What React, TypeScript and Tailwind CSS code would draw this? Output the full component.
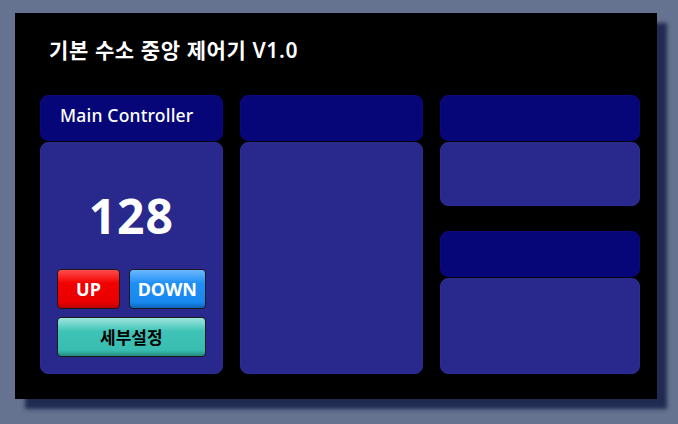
import React from 'react';

const font = { fontFamily: '"Noto Sans", "Noto Sans CJK KR", sans-serif' };

const Header = ({ children }: { children?: React.ReactNode }) => (
  <div className="h-[46px] shrink-0 rounded-[8px] border border-[#0a0a7e] bg-[#060679] pl-[19px] pb-[5px] flex items-center">
    {children}
  </div>
);

const Body = ({ className = '', children }: { className?: string; children?: React.ReactNode }) => (
  <div className={`rounded-[8px] border border-[#2c2c92] bg-[#29298d] ${className}`}>{children}</div>
);

const GlossButton = ({
  label,
  className,
  textClass,
}: {
  label: string;
  className: string;
  textClass: string;
}) => (
  <button
    type="button"
    className={`relative flex items-center justify-center overflow-hidden rounded-[4px] border border-[#1a1a1a] ${className}`}
  >
    <span className={`relative font-bold leading-none ${textClass}`}>{label}</span>
  </button>
);

export default function App() {
  return (
    <div className="w-[678px] h-[424px] bg-[#667390] pl-[15px] pt-[13px]" style={font}>
      <div className="w-[642px] h-[386px] bg-black shadow-[10px_10px_4px_rgba(20,30,70,0.85)] flex flex-col pl-[25px] pr-[17px]">
        <h1 className="h-[82px] pl-[9px] pt-[24px] text-[21px] font-semibold text-white leading-[26px] tracking-[0.6px]">
          기본 수소 중앙 제어기 V1.0
        </h1>

        <div className="flex gap-[17px] h-[279px]">
          {/* column 1 */}
          <div className="w-[183px] flex flex-col gap-[1px]">
            <Header>
              <span className="text-[17.5px] font-medium text-white leading-none tracking-[0.2px]">Main Controller</span>
            </Header>
            <Body className="flex-1 flex flex-col items-center px-[16px]">
              <div className="mt-[47px] h-[52px] text-[48px] font-bold text-white leading-none tracking-[1px] flex items-center">
                128
              </div>
              <div className="mt-[27px] w-full flex gap-[9px]">
                <GlossButton
                  label="UP"
                  className="w-[63px] h-[40px] bg-[linear-gradient(to_bottom,#ff4d4d_0%,#f20000_35%,#e80000_85%,#b80000_100%)]"
                  textClass="text-[18px] text-white"
                />
                <GlossButton
                  label="DOWN"
                  className="flex-1 h-[40px] bg-[linear-gradient(to_bottom,#6cb8ff_0%,#1f8ff5_35%,#1888ee_85%,#0d63b8_100%)]"
                  textClass="text-[18px] text-white"
                />
              </div>
              <GlossButton
                label="세부설정"
                className="mt-[8px] w-full h-[40px] bg-[linear-gradient(to_bottom,#9ee6de_0%,#3fc3b6_35%,#38bdb0_85%,#24897f_100%)]"
                textClass="text-[17px] text-black"
              />
            </Body>
          </div>

          {/* column 2 */}
          <div className="w-[184px] flex flex-col gap-[1px]">
            <Header />
            <Body className="flex-1" />
          </div>

          {/* column 3 */}
          <div className="w-[200px] flex flex-col gap-[1px]">
            <Header />
            <Body className="h-[64px]" />
            <div className="mt-[24px]">
              <Header />
            </div>
            <Body className="flex-1" />
          </div>
        </div>
      </div>
    </div>
  );
}
